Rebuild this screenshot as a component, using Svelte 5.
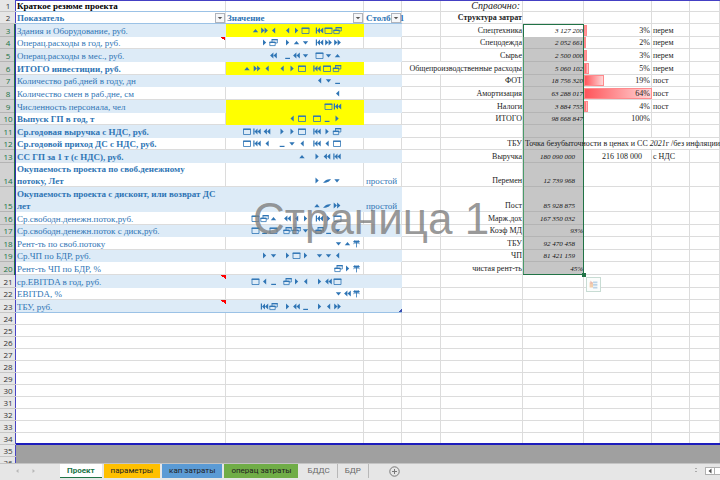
<script>
  const heights = [12, 12, 13, 12, 13, 13, 12, 13, 13, 12, 13, 12, 13, 24, 25, 13, 12, 13, 12, 13, 13, 12, 13];

  // Glyph codes: u up, d down, l left, r right, f fast forward, w rewind, s skip to start,
  // q square, c cascade, m minimise, g diagonal, p percent sign of the symbol font
  const summary = {
    3: { name: 'Здания и Оборудование, руб.', value: 'ufl lrq sqc', yellow: true },
    4: { name: 'Операц.расходы в год, руб.', value: 'rc rud sff', note: true },
    5: { name: 'Операц.расходы в мес., руб.', value: 'w mwd qdu' },
    6: { name: 'ИТОГО инвестиции, руб.', value: 'ufl lrq sqc', yellow: true, bold: true },
    7: { name: 'Количество раб.дней в году, дн', value: 'ldm' },
    8: { name: 'Количество смен в раб.дне, см', value: 'l' },
    9: { name: 'Численность персонала, чел', value: 'qs', yellow: true },
    10: { name: 'Выпуск ГП в год, т', value: 'lq qmr', yellow: true, bold: true },
    11: { name: 'Ср.годовая выручка с НДС, руб.', value: 'qsw rrq src', bold: true },
    12: { name: 'Ср.годовой приход ДС с НДС, руб.', value: 'qsl mdl slq', bold: true },
    13: { name: 'СС ГП за 1 т (с НДС), руб.', value: 'u rws', bold: true },
    14: { name: 'Окупаемость проекта по своб.денежному\nпотоку, Лет', value: 'rgd', bold: true, kind: 'простой' },
    15: { name: 'Окупаемость проекта с дисконт, или возврат ДС\nлет', value: 'ugf', bold: true, kind: 'простой' },
    16: { name: 'Ср.свободн.денежн.поток,руб.', value: 'qcu wlr srq' },
    17: { name: 'Ср.свободн.денежн.поток с диск,руб.', value: 'qmq ccd cmd' },
    18: { name: 'Рент-ть по своб.потоку', value: 'dup' },
    19: { name: 'Ср.ЧП по БДР, руб.', value: 'rd rqr ddl' },
    20: { name: 'Рент-ть ЧП по БДР, %', value: 'crp' },
    21: { name: 'ср.EBITDA в год, руб.', value: 'qlm crl rwq', note: true },
    22: { name: 'EBITDA, %', value: 'dwp' },
    23: { name: 'ТБУ, руб.', value: 'sc rwm rlf', note: true }
  };

  const costs = {
    3: { label: 'Спецтехника', sum: '3 127 200', pct: 3, kind: 'перем' },
    4: { label: 'Спецодежда', sum: '2 052 661', pct: 2, kind: 'перем' },
    5: { label: 'Сырье', sum: '2 500 000', pct: 3, kind: 'перем' },
    6: { label: 'Общепроизводственные расходы', sum: '5 060 102', pct: 5, kind: 'перем' },
    7: { label: 'ФОТ', sum: '18 756 320', pct: 19, kind: 'пост' },
    8: { label: 'Амортизация', sum: '63 288 017', pct: 64, kind: 'пост' },
    9: { label: 'Налоги', sum: '3 884 755', pct: 4, kind: 'пост' },
    10: { label: 'ИТОГО', sum: '98 668 847', total: '100%' },
    12: { label: 'ТБУ', spill: true },
    13: { label: 'Выручка', sum: '180 090 000', inset: true, total: '216 108 000', totalInset: true, kind: 'с НДС' },
    14: { label: 'Перемен', sum: '12 739 968', inset: true },
    15: { label: 'Пост', sum: '85 928 875', inset: true },
    16: { label: 'Марж.дох', sum: '167 350 032', inset: true },
    17: { label: 'Коэф МД', sum: '93%' },
    18: { label: 'ТБУ', sum: '92 470 458', inset: true },
    19: { label: 'ЧП', sum: '81 421 159', inset: true },
    20: { label: 'чистая рент-ть', sum: '45%' }
  };

  const rows = Array.from({ length: 34 }, (_, i) => ({
    n: i + 1,
    h: heights[i] ?? 12,
    a: summary[i + 1],
    c: costs[i + 1]
  }));

  const tabs = [
    { name: 'Проект', tone: 'active' },
    { name: 'параметры', tone: 'amber' },
    { name: 'кап затраты', tone: 'blue' },
    { name: 'операц затраты', tone: 'green' },
    { name: 'БДДС', tone: 'plain' },
    { name: 'БДР', tone: 'plain' }
  ];
</script>

{#snippet glyph(k)}
  <svg class="glyph" viewBox="0 0 9 9" aria-hidden="true">
    {#if k === 'u'}<path d="M1.8 6.2L4.5 3L7.2 6.2z" />
    {:else if k === 'd'}<path d="M1.8 3.3H7.2L4.5 6.5z" />
    {:else if k === 'l'}<path d="M6.2 1.6V7.4L3 4.5z" />
    {:else if k === 'r'}<path d="M3 1.6V7.4L6.2 4.5z" />
    {:else if k === 'f'}<path d="M1.2 1.6V7.4L4.5 4.5zM4.6 1.6V7.4L7.9 4.5z" />
    {:else if k === 'w'}<path d="M4.4 1.6V7.4L1.1 4.5zM7.8 1.6V7.4L4.5 4.5z" />
    {:else if k === 's'}<path d="M.8 1.6H2V7.4H.8zM5 1.6V7.4L2 4.5zM8.2 1.6V7.4L5 4.5z" />
    {:else if k === 'q'}<path class="line" d="M1 2.2H8V7.5H1z" /><path d="M.6 1.6H8.4V2.9H.6z" />
    {:else if k === 'c'}<path class="line" d="M3 4V1.7H8.3V5H6.3M.8 4.2H6.2V7.6H.8z" /><path d="M2.6 1H8.7V2.2H2.6zM.4 3.8H6.6V4.9H.4z" />
    {:else if k === 'm'}<path d="M2.2 6.8H7V8H2.2z" />
    {:else if k === 'g'}<path d="M.6 6.8C2.6 4.8 3.4 3.2 8.6 3.2C6.6 5 6.2 6.6 .6 6.8z" />
    {:else}<path class="line" d="M1 3Q2.6 1 4.5 3Q6.4 1 8 3M1.4 4.8Q3 3 4.5 4.4Q6 3 7.6 4.8M4.5 3V8.4" /><path d="M2 1.6H7V3.6H2z" />
    {/if}
  </svg>
{/snippet}

{#snippet filter(col)}
  <button class="filter" aria-label={'Фильтр: ' + col}>
    <svg viewBox="0 0 9 9" aria-hidden="true"><path d="M2 3.5H7L4.5 6z" /></svg>
  </button>
{/snippet}

<div class="app">
  <main class="sheet">
    <table>
      <colgroup>
        <col class="w-num" /><col class="w-a" /><col class="w-b" /><col class="w-c" /><col class="w-d" />
        <col class="w-e" /><col class="w-f" /><col class="w-g" /><col class="w-h" /><col />
      </colgroup>
      <tbody>
        {#each rows as { n, h, a, c } (n)}
          <tr class:first={n === 1} class:head={n === 2} class:band={a && n % 2 === 1} class:inlist={a} class:last={n === 34} class:end={n === 23} style="height: {h}px">
            <th scope="row" class:on={n > 2 && n < 21}>{n}</th>
            <td class="a" class:bold={a?.bold} class:note={a?.note}>
              {#if n === 1}<b>Краткое резюме проекта</b>
              {:else if n === 2}<div class="title">Показатель{@render filter('Показатель')}</div>
              {:else if a}<div class="name">{a.name}</div>{/if}
            </td>
            <td class="b" class:yellow={a?.yellow}>
              {#if n === 2}<div class="title">Значение{@render filter('Значение')}</div>
              {:else if a}
                <div class="glyphs" class:wide={a.bold} class:pct={a.value.endsWith('p')}>
                  {#each a.value.split(' ') as group}
                    <span>{#each group as k}{@render glyph(k)}{/each}</span>
                  {/each}
                </div>
              {/if}
            </td>
            <td class="c">
              {#if n === 2}<div class="title">Столбец1{@render filter('Столбец1')}</div>{:else}{a?.kind ?? ''}{/if}
            </td>
            <td class="d" class:open={n === 6}></td>
            <td class="e">
              <div class="right">
                {#if n === 1}<i>Справочно:</i>{:else if n === 2}<b>Структура затрат</b>{:else}{c?.label ?? ''}{/if}
              </div>
            </td>
            <td class="f" class:sel={n > 2 && n < 21} class:cursor={n === 3} class:bottom={n === 20}>
              {#if c?.spill}<div class="spill">Точка безубыточности в ценах и СС <i>2021</i>г /без инфляции/</div>
              {:else}<div class="right sum" class:inset={c?.inset}>{c?.sum ?? ''}</div>{/if}
              {#if n === 20}
                <span class="handle"></span>
                <button class="quick" aria-label="Экспресс-анализ">
                  <svg viewBox="0 0 15 15" aria-hidden="true"><path fill="#f3cfae" d="M3 5h4v6H3z" /><path fill="#bcd3e6" d="M7 4h5v2H7zM7 7h5v2H7zM7 10h5v2H7z" /><path fill="#e9b9b0" d="M4 3l3 3-3 1z" /></svg>
                </button>
              {/if}
            </td>
            <td class="g" class:open={c?.spill}>
              <div class="stack">
                {#if c?.pct}<span class="bar" style="width: {(c.pct / 64) * 100}%"></span>{/if}
                <span class="num" class:inset={c?.totalInset}>{c?.pct ? c.pct + '%' : (c?.total ?? '')}</span>
              </div>
            </td>
            <td class="h" class:open={c?.spill}>{c?.kind ?? ''}</td>
            <td></td>
          </tr>
        {/each}
        <tr class="off"><th scope="row">35</th><td colspan="9"></td></tr>
        <tr class="off"><th scope="row">36</th><td colspan="9"></td></tr>
      </tbody>
    </table>
    <div class="watermark">Страница 1</div>
  </main>

  <footer>
    <div class="nav">
      <button aria-label="Предыдущий лист"><svg viewBox="0 0 6 6"><path d="M4.5 1V5L2 3z" /></svg></button>
      <button aria-label="Следующий лист"><svg viewBox="0 0 6 6"><path d="M1.5 1V5L4 3z" /></svg></button>
    </div>
    {#each tabs as t}
      <button class="tab {t.tone}">{t.name}</button>
    {/each}
    <button class="add" aria-label="Новый лист">
      <svg viewBox="0 0 11 11"><circle cx="5.5" cy="5.5" r="4.7" /><path d="M5.5 3V8M3 5.5H8" /></svg>
    </button>
    <div class="grip"></div>
    <div class="scroll"><button aria-label="Прокрутить влево"><svg viewBox="0 0 6 6"><path d="M4.5 .5V5.5L1.5 3z" /></svg></button></div>
  </footer>
</div>

<style>
  :global(body) { margin: 0; background: #fff; }

  .app {
    display: flex;
    flex-direction: column;
    height: 100vh;
    overflow: hidden;
    font: 8px/12px "Liberation Serif", serif;
    color: #222;
  }
  button { margin: 0; padding: 0; border: 0; background: none; font: inherit; color: inherit; }
  svg { display: block; }

  .sheet { position: relative; flex: 1; min-height: 0; overflow: hidden; }

  table { width: 100%; table-layout: fixed; border-collapse: separate; border-spacing: 0; }
  .w-num { width: 16px; }
  .w-a { width: 210px; }
  .w-b { width: 138px; }
  .w-c { width: 38px; }
  .w-d { width: 39px; }
  .w-e { width: 82px; }
  .w-f { width: 61px; }
  .w-g { width: 68px; }
  .w-h { width: 38px; }

  th, td { padding: 0; vertical-align: bottom; white-space: nowrap; }
  td { box-shadow: inset -1px -1px #dcdcdc; }
  th {
    background: #e6e6e6;
    box-shadow: inset 0 -1px #c6c6c6, inset -1px 0 #4844c4;
    color: #333;
    font: 8px/12px "Open Sans", "Noto Sans", sans-serif;
    text-align: center;
  }
  th.on { background: #d2d2d2; color: #217346; box-shadow: inset -1px 0 #3430b0, inset -2px 0 #217346, inset 0 -1px #b4b4b4; }

  .first td { box-shadow: inset 0 1px #4440c4, inset -1px -1px #dcdcdc; }
  .last td { box-shadow: inset 0 -2px #1c1cbc, inset -1px 0 #dcdcdc; }

  .a, .b, .c { font-size: 9px; color: #2f75b5; }
  .a { padding-left: 1px; }
  .name { white-space: pre; }
  .c { padding-left: 2px; }
  .first .a { color: #000; }
  .bold { font-weight: bold; }
  .band .a, .band .b, .band .c { background: #ddebf7; box-shadow: none; }
  .b.yellow, .band .b.yellow { background: #ff0; box-shadow: none; }
  .first .a, .first .b, .first .c { box-shadow: inset 0 1px #4440c4, inset 0 -1px #9bc2e6, inset -1px 0 #dcdcdc; }
  .head .a, .head .b, .head .c { box-shadow: inset 0 -1px #9bc2e6, inset -1px 0 #dcdcdc; font-weight: bold; }
  .end .a, .end .b, .end .c { box-shadow: inset 0 -1px #9bc2e6; }
  .end .c { background: linear-gradient(135deg, #ddebf7 50%, #3c50b0 50%) right bottom / 4px 4px no-repeat, #ddebf7; }
  .a.note, .band .a.note { background-image: linear-gradient(45deg, rgba(255, 0, 0, 0) 50%, #f00 50%); background-position: right top; background-size: 5px 5px; background-repeat: no-repeat; }

  .title { display: flex; position: relative; padding-left: 1px; }
  .a .title, .c .title { padding-left: 0; }
  .filter {
    position: absolute;
    right: 1px;
    top: 1px;
    width: 10px;
    height: 10px;
    box-sizing: border-box;
    border: 1px solid #b0b4bc;
    background: #f6f7f9;
  }
  .filter svg { width: 8px; height: 8px; fill: #555; }

  .glyphs { display: flex; justify-content: flex-end; gap: 5px; padding: 0 22px 2px 0; }
  .glyphs.pct { padding-right: 3px; }
  .glyphs span { display: flex; }
  .glyph { width: 9px; height: 9px; fill: #2f75b5; }
  .glyph .line { fill: none; stroke: #2f75b5; stroke-width: .8; }
  .wide .glyph { width: 10px; }

  .right { display: flex; justify-content: flex-end; padding-right: 1px; }
  .right i { padding-right: 2px; font-size: 10px; }
  .d.open { box-shadow: inset 0 -1px #dcdcdc; }
  .sum { font-size: 7px; font-style: italic; color: #111; }
  .sum.inset { padding-right: 9px; }

  .f.sel { background: #c6c6c6; box-shadow: inset -1px 0 #217346, inset 1px 0 #4a9a6a, inset 0 -1px #b4b4b4; }
  .f.cursor { background: #fff; box-shadow: inset -1px 0 #217346, inset 1px 1px #217346; }
  .f.bottom { position: relative; box-shadow: inset -1px -1px #217346, inset 1px 0 #4a9a6a; }
  .handle { position: absolute; right: -2px; bottom: -2px; width: 4px; height: 4px; background: #217346; }
  .quick { position: absolute; left: 100%; top: 100%; margin: 2px; width: 15px; height: 15px; box-sizing: border-box; border: 1px solid #c8dcd4; background: #fbfdfc; }
  .spill { display: flex; width: 0; padding-left: 2px; white-space: pre; }
  .open { box-shadow: inset 0 -1px #dcdcdc; }

  .stack { display: grid; height: 12px; }
  .stack > * { grid-area: 1 / 1; }
  .bar { box-sizing: border-box; height: 11px; border: 1px solid #ff8a8d; background: linear-gradient(90deg, #ff555a, #ffd6d7); }
  .num { text-align: right; padding-right: 2px; }
  .num.inset { padding-right: 10px; }
  .h { padding-left: 1px; }

  .off { height: 12px; }
  .off td { background: #a0a0a0; box-shadow: none; }

  .watermark {
    position: absolute;
    left: 253px;
    top: 194px;
    font: 44px/50px "Liberation Sans", sans-serif;
    color: rgba(125, 125, 125, .8);
    pointer-events: none;
  }

  footer {
    display: flex;
    align-items: stretch;
    height: 17px;
    box-sizing: border-box;
    padding-bottom: 2px;
    border-top: 1px solid #c4c4c4;
    background: #e6e6e6;
    font: 8px/14px Roboto, "Noto Sans", sans-serif;
  }
  .nav { display: flex; align-items: center; gap: 11px; width: 46px; padding-left: 14px; }
  .nav svg, .scroll svg { width: 6px; height: 6px; fill: #b8b8b8; }
  .tab { padding: 0 7px; margin-right: 2px; }
  .tab.active { background: #fff; color: #217346; font-weight: bold; box-shadow: inset 0 -1px #217346; }
  .tab.amber { background: #ffc000; }
  .tab.blue { background: #5b9bd5; }
  .tab.green { background: #70ad47; }
  .tab.plain { margin: 0; color: #666; border-right: 1px solid #b8b8b8; }
  .add { margin-left: 20px; }
  .add svg { width: 11px; height: 11px; fill: none; stroke: #777; }
  .grip { width: 2px; margin: 4px 8px 4px auto; background: repeating-linear-gradient(#aaa 0 1px, transparent 1px 3px); }
  .scroll { display: flex; width: 15px; margin: 3px 0; border: 1px solid #b0b0b0; border-right: 0; background: #fff; box-sizing: border-box; }
  .scroll button { display: flex; align-items: center; width: 9px; justify-content: center; border-right: 1px solid #b0b0b0; }
  .scroll svg { fill: #555; }
</style>
